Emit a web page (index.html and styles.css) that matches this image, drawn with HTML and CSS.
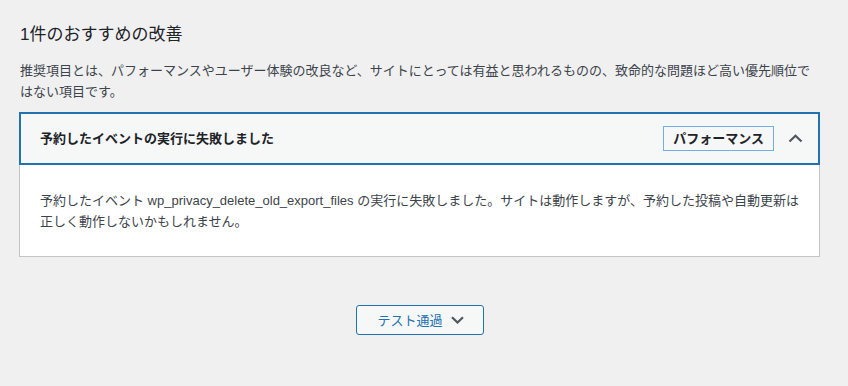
FILE: index.html
```html
<!DOCTYPE html>
<html lang="ja">
<head>
  <meta charset="UTF-8">
  <meta name="viewport" content="width=device-width, initial-scale=1.0">
  <title>サイトヘルス</title>
  <link rel="stylesheet" href="styles.css">
</head>
<body>
  <div class="health-body">
    <h3 class="issues-title">1件のおすすめの改善</h3>

    <p class="issues-desc">推奨項目とは、パフォーマンスやユーザー体験の改良など、サイトにとっては有益と思われるものの、致命的な問題ほど高い優先順位ではない項目です。</p>

    <div class="accordion">
      <button class="accordion-trigger" type="button" aria-expanded="true">
        <span class="accordion-title">予約したイベントの実行に失敗しました</span>
        <span class="badge badge-blue">パフォーマンス</span>
        <span class="accordion-icon">
          <svg width="15" height="9" viewBox="0 0 15 9"><polyline points="1.5,7.5 7.5,1.8 13.5,7.5" fill="none" stroke="#50575e" stroke-width="2.2"/></svg>
        </span>
      </button>
      <div class="accordion-panel">
        <p>予約したイベント wp_privacy_delete_old_export_files の実行に失敗しました。サイトは動作しますが、予約した投稿や自動更新は正しく動作しないかもしれません。</p>
      </div>
    </div>

    <div class="passed-wrap">
      <button class="passed-toggle" type="button">
        テスト通過
        <svg width="13" height="8" viewBox="0 0 13 8"><polyline points="1,1.2 6.5,6.5 12,1.2" fill="none" stroke="#50575e" stroke-width="2.2"/></svg>
      </button>
    </div>
  </div>
</body>
</html>
```

FILE: styles.css
```css
:root {
  --bg: #f0f0f1;
  --text: #1d2327;
  --text-soft: #3c434a;
  --blue: #2271b1;
  --blue-light: #72aee6;
  --panel-border: #c3c4c7;
  --header-bg: #f6f7f7;
}
body {
  margin: 0;
  background: var(--bg);
  color: var(--text-soft);
  font-family: "Liberation Sans", "Noto Sans CJK JP", sans-serif;
  font-size: 13px;
  line-height: 21px;
}
.health-body {
  max-width: 800px;
  padding: 0 20px;
}
.issues-title {
  margin: 0;
  padding-top: 23px;
  font-size: 17px;
  line-height: 24px;
  font-weight: 400;
  color: var(--text);
}
.issues-desc {
  margin: 13px 0 10px;
}
.accordion {
  margin-left: -1px;
}
.accordion-trigger {
  display: flex;
  align-items: center;
  width: 100%;
  height: 53px;
  box-sizing: border-box;
  margin: 0;
  padding: 0 15px 0 19px;
  background: var(--header-bg);
  border: 2px solid var(--blue);
  font: inherit;
  color: var(--text);
  text-align: left;
  cursor: pointer;
}
.accordion-title {
  flex: 1;
  font-weight: 700;
}
.badge {
  padding: 0 9px;
  line-height: 23px;
  font-weight: 700;
  color: var(--text);
}
.badge-blue {
  border: 1px solid var(--blue-light);
}
.accordion-icon {
  display: flex;
  margin-left: 14px;
}
.accordion-panel {
  background: #fff;
  border: 1px solid var(--panel-border);
  border-top: none;
  padding: 25px 16px 24px 20px;
}
.accordion-panel p {
  margin: 0;
}
.passed-wrap {
  display: flex;
  justify-content: center;
  margin-top: 48px;
}
.passed-toggle {
  display: flex;
  align-items: center;
  gap: 8px;
  height: 30px;
  box-sizing: border-box;
  padding: 0 19px 0 20px;
  background: var(--header-bg);
  border: 1px solid var(--blue);
  border-radius: 3px;
  color: var(--blue);
  font: inherit;
  cursor: pointer;
}
```
